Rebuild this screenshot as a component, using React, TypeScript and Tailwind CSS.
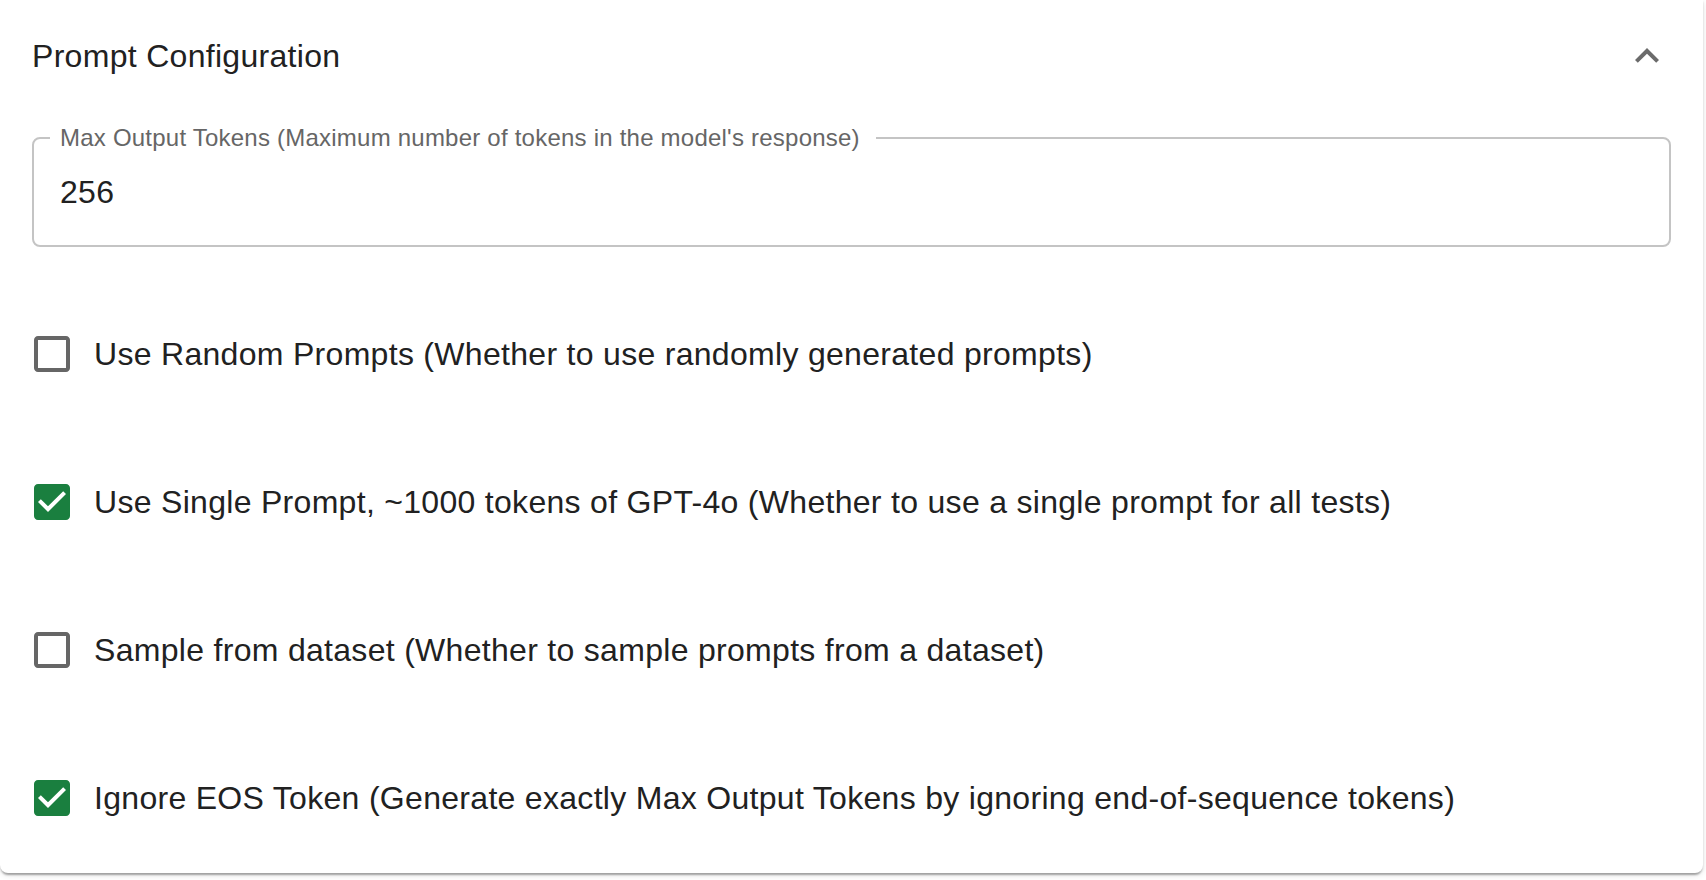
import React from "react";

const options = [
  { label: "Use Random Prompts (Whether to use randomly generated prompts)", checked: false },
  { label: "Use Single Prompt, ~1000 tokens of GPT-4o (Whether to use a single prompt for all tests)", checked: true },
  { label: "Sample from dataset (Whether to sample prompts from a dataset)", checked: false },
  { label: "Ignore EOS Token (Generate exactly Max Output Tokens by ignoring end-of-sequence tokens)", checked: true },
];

function CheckIcon({ checked }: { checked: boolean }) {
  if (checked) {
    return (
      <svg viewBox="0 0 24 24" className="w-12 h-12 shrink-0 fill-[#1a7f3f]">
        <path d="M19 3H5c-1.11 0-2 .9-2 2v14c0 1.1.89 2 2 2h14c1.11 0 2-.9 2-2V5c0-1.1-.89-2-2-2zm-9 14l-5-5 1.41-1.41L10 14.17l7.59-7.59L19 8l-9 9z" />
      </svg>
    );
  }
  return (
    <svg viewBox="0 0 24 24" className="w-12 h-12 shrink-0 fill-[#666666]">
      <path d="M19 5v14H5V5h14m0-2H5c-1.1 0-2 .9-2 2v14c0 1.1.9 2 2 2h14c1.1 0 2-.9 2-2V5c0-1.1-.9-2-2-2z" />
    </svg>
  );
}

function PromptConfig() {
  return (
    <div className="w-[1703px] h-[873px] bg-white rounded-b-lg shadow-[0_4px_2px_-2px_rgba(0,0,0,0.2),0_2px_2px_0_rgba(0,0,0,0.14),0_2px_6px_0_rgba(0,0,0,0.12)] flex flex-col">
      <div className="h-[112px] px-8 flex items-center justify-between">
        <h2 className="text-[32px] leading-[48px] tracking-[0.3px] text-[#212121]">Prompt Configuration</h2>
        <svg viewBox="0 0 24 24" className="w-12 h-12 fill-[#6b6b6b]">
          <path d="m12 8-6 6 1.41 1.41L12 10.83l4.59 4.58L18 14z" />
        </svg>
      </div>

      <div className="mx-8 mt-[25px] relative h-[110px] border-2 border-[#c4c4c4] rounded-lg flex items-center px-[26px]">
        <span className="absolute left-[16px] top-[-17px] bg-white pl-[10px] pr-[16px] text-[24px] leading-[32px] tracking-[0.225px] text-[#666666]">
          Max Output Tokens (Maximum number of tokens in the model's response)
        </span>
        <span className="text-[32px] leading-[48px] tracking-[0.3px] text-[#212121]">256</span>
      </div>

      <div className="mt-[65px] flex flex-col gap-[64px]">
        {options.map((o) => (
          <div key={o.label} className="h-[84px] pl-[28px] flex items-center">
            <CheckIcon checked={o.checked} />
            <span className="ml-[18px] text-[32px] leading-[48px] tracking-[0.3px] text-[#212121]">{o.label}</span>
          </div>
        ))}
      </div>
    </div>
  );
}

export default function App() {
  return (
    <div className="w-[1706px] h-[880px] bg-white font-['Liberation_Sans',Arial,sans-serif]">
      <PromptConfig />
    </div>
  );
}
